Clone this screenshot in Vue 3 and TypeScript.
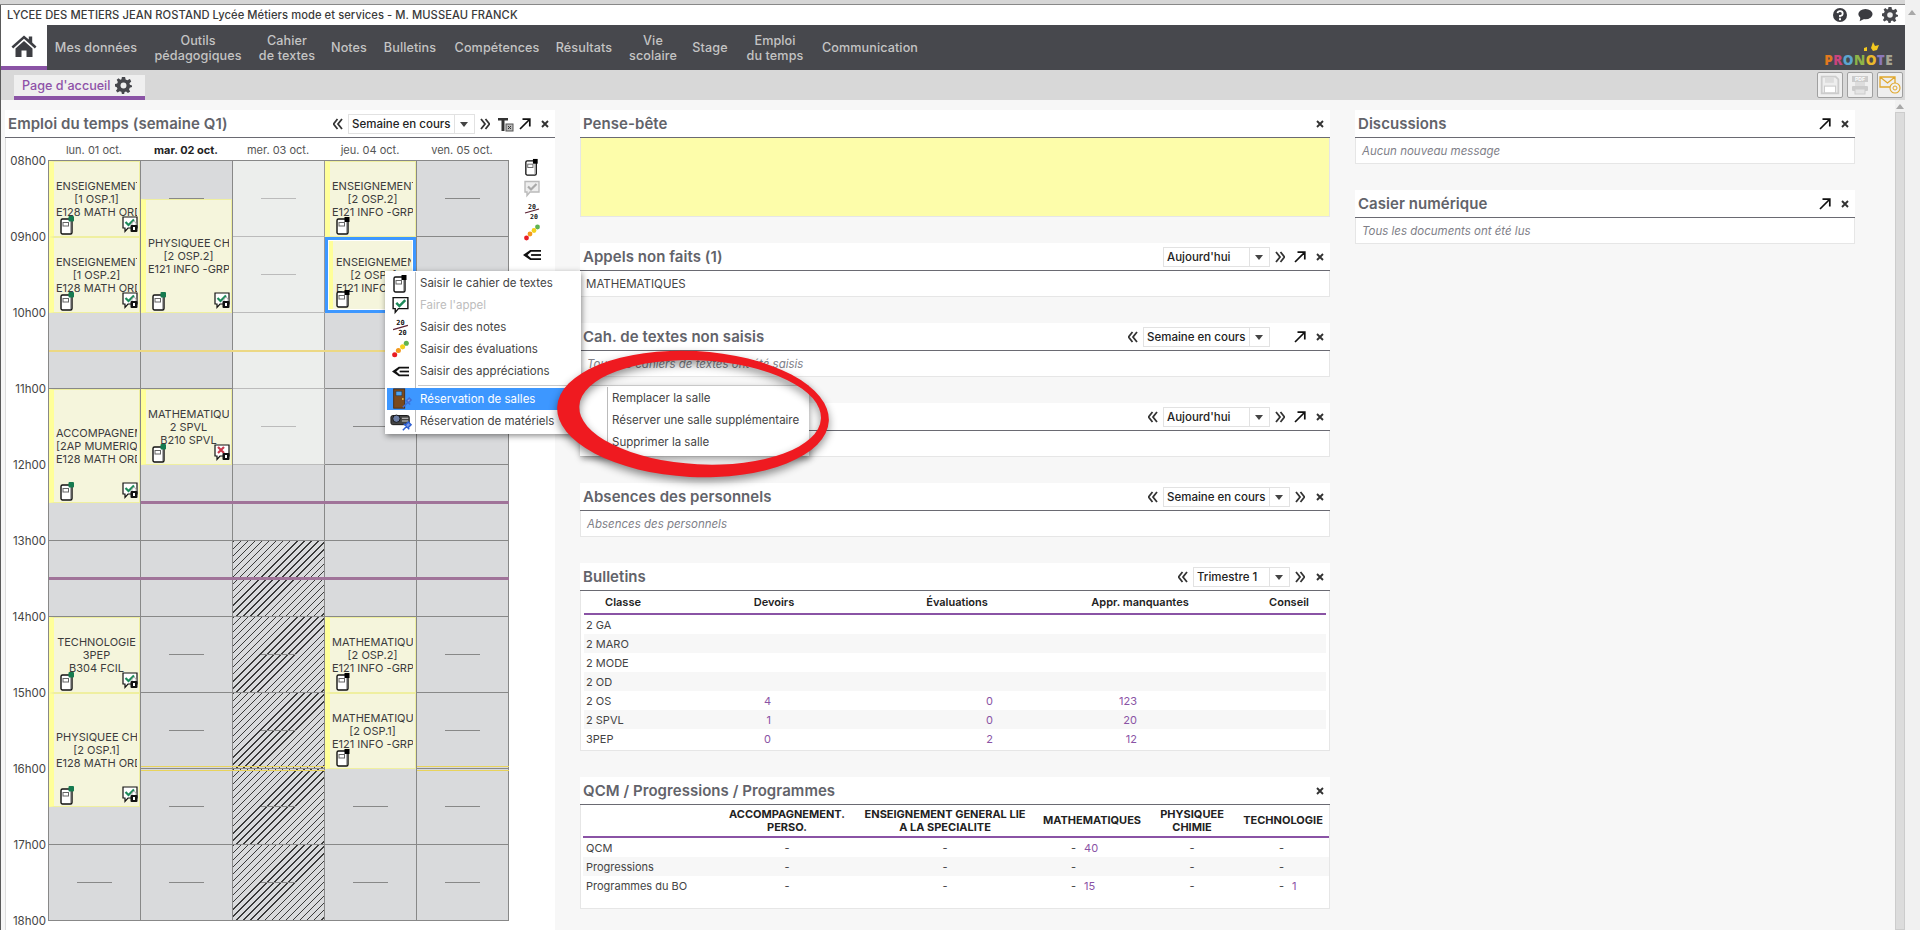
<script setup lang="ts">
interface NavItem { lines: string[]; width: number }
const nav: NavItem[] = [
  { lines: ['Mes données'], width: 98 },
  { lines: ['Outils', 'pédagogiques'], width: 106 },
  { lines: ['Cahier', 'de textes'], width: 72 },
  { lines: ['Notes'], width: 52 },
  { lines: ['Bulletins'], width: 70 },
  { lines: ['Compétences'], width: 104 },
  { lines: ['Résultats'], width: 70 },
  { lines: ['Vie', 'scolaire'], width: 68 },
  { lines: ['Stage'], width: 46 },
  { lines: ['Emploi', 'du temps'], width: 84 },
  { lines: ['Communication'], width: 106 }
]
const hours = ['08h00', '09h00', '10h00', '11h00', '12h00', '13h00', '14h00', '15h00', '16h00', '17h00', '18h00']
const days = ['lun. 01 oct.', 'mar. 02 oct.', 'mer. 03 oct.', 'jeu. 04 oct.', 'ven. 05 oct.']

interface Cell { key: string; area: string; kind: string }
const cells: Cell[] = []
for (let d = 0; d < 5; d++) {
  for (let h = 0; h < 10; h++) {
    let kind = ''
    if (d === 2 && h < 4) kind = 'light'
    if (d === 2 && h >= 5) kind = 'hatch'
    cells.push({ key: `${d}-${h}`, area: `${h * 2 + 1} / ${d + 1} / span 2 / span 1`, kind })
  }
}

interface Course {
  day: number; start: number; span: number; lines: string[];
  doc: string; chat: string; selected?: boolean
}
const courses: Course[] = [
  { day: 0, start: 0, span: 2, lines: ['ENSEIGNEMENT GENERAL', '[1 OSP.1]', 'E128 MATH ORDI'], doc: 'doc-green', chat: 'chat-ok' },
  { day: 0, start: 2, span: 2, lines: ['ENSEIGNEMENT GENERAL', '[1 OSP.2]', 'E128 MATH ORDI'], doc: 'doc-green', chat: 'chat-ok' },
  { day: 0, start: 6, span: 3, lines: ['ACCOMPAGNEMENT', '[2AP MUMERIQUE]', 'E128 MATH ORDI'], doc: 'doc-green', chat: 'chat-ok' },
  { day: 0, start: 12, span: 2, lines: ['TECHNOLOGIE', '3PEP', 'B304 FCIL'], doc: 'doc-green', chat: 'chat-ok' },
  { day: 0, start: 14, span: 3, lines: ['PHYSIQUEE CHIMIE', '[2 OSP.1]', 'E128 MATH ORDI'], doc: 'doc-green', chat: 'chat-ok' },
  { day: 1, start: 1, span: 3, lines: ['PHYSIQUEE CHIMIE', '[2 OSP.2]', 'E121 INFO -GRP'], doc: 'doc-green', chat: 'chat-ok' },
  { day: 1, start: 6, span: 2, lines: ['MATHEMATIQUES', '2 SPVL', 'B210 SPVL'], doc: 'doc-green', chat: 'chat-no' },
  { day: 3, start: 0, span: 2, lines: ['ENSEIGNEMENT GENERAL', '[2 OSP.2]', 'E121 INFO -GRP'], doc: 'doc-black', chat: '' },
  { day: 3, start: 2, span: 2, lines: ['ENSEIGNEMENT GENERAL', '[2 OSP.1]', 'E121 INFO -GRP'], doc: 'doc-black', chat: '', selected: true },
  { day: 3, start: 12, span: 2, lines: ['MATHEMATIQUES', '[2 OSP.2]', 'E121 INFO -GRP'], doc: 'doc-black', chat: '' },
  { day: 3, start: 14, span: 2, lines: ['MATHEMATIQUES', '[2 OSP.1]', 'E121 INFO -GRP'], doc: 'doc-black', chat: '' }
]
const courseArea = (c: Course) => `${c.start + 1} / ${c.day + 1} / span ${c.span} / span 1`

interface Rule { key: string; row: number; col: number; span: number; kind: string }
const rules: Rule[] = [
  { key: 'a', row: 4, col: 0, span: 5, kind: 'gold' },
  { key: 'b', row: 8, col: 1, span: 4, kind: 'purple' },
  { key: 'c', row: 10, col: 0, span: 5, kind: 'purple' },
  { key: 'd', row: 15, col: 1, span: 2, kind: 'double' },
  { key: 'e', row: 15, col: 4, span: 1, kind: 'double' }
]
const ruleArea = (r: Rule) => `${r.row + 1} / ${r.col + 1} / span 1 / span ${r.span}`

const sideIcons = ['doc-black', 'chat-gray', 'notes', 'dots', 'appr']

const bulletins = [
  ['2 GA', '', '', ''], ['2 MARO', '', '', ''], ['2 MODE', '', '', ''], ['2 OD', '', '', ''],
  ['2 OS', '4', '0', '123'], ['2 SPVL', '1', '0', '20'], ['3PEP', '0', '2', '12']
]
const menuItems = [
  { icon: 'doc-black', label: 'Saisir le cahier de textes', off: false },
  { icon: 'chat-green', label: "Faire l'appel", off: true },
  { icon: 'notes', label: 'Saisir des notes', off: false },
  { icon: 'dots', label: 'Saisir des évaluations', off: false },
  { icon: 'appr', label: 'Saisir des appréciations', off: false }
]
const subItems = ['Remplacer la salle', 'Réserver une salle supplémentaire', 'Supprimer la salle']
const qcmHeads = [['ACCOMPAGNEMENT.', 'PERSO.'], ['ENSEIGNEMENT GENERAL LIE', 'A LA SPECIALITE'], ['MATHEMATIQUES'], ['PHYSIQUEE', 'CHIMIE'], ['TECHNOLOGIE']]
const qcmRows = [
  { label: 'QCM', math: '40', tech: '' },
  { label: 'Progressions', math: '', tech: '' },
  { label: 'Programmes du BO', math: '15', tech: '1' }
]
</script>

<template>
  <div class="root">
    <svg class="sprites" aria-hidden="true">
      <defs>
        <symbol id="doc-green" viewBox="0 0 15 19">
          <rect x="1" y="3" width="11" height="15" rx="1.5" fill="#fff" stroke="#111" stroke-width="1.4" />
          <rect x="3" y="6.5" width="5.5" height="3.5" fill="#fff" stroke="#666" />
          <path d="M10.5 3.5V17" stroke="#aaa" />
          <rect x="8.5" y="0" width="5.5" height="5.5" rx="1" fill="#157a4f" />
        </symbol>
        <symbol id="doc-black" viewBox="0 0 15 19">
          <rect x="1" y="3" width="11" height="15" rx="1.5" fill="#fff" stroke="#111" stroke-width="1.4" />
          <rect x="3" y="6.5" width="5.5" height="3.5" fill="#fff" stroke="#666" />
          <path d="M10.5 3.5V17" stroke="#aaa" />
          <rect x="8.5" y="1" width="5" height="5" fill="#000" />
        </symbol>
        <symbol id="chat-ok" viewBox="0 0 16 18">
          <path d="M1 1H15V12H6L3 15.5V12H1Z" fill="#fff" stroke="#111" stroke-width="1.2" />
          <path d="M3.5 6L6.5 9L12 3.5" fill="none" stroke="#1d8a5a" stroke-width="2.2" />
          <rect x="8.5" y="9" width="7" height="7" rx="1" fill="#111" />
          <path d="M10 9V7.5A2 2 0 0 1 14 7.5V9" fill="none" stroke="#aaa" />
          <rect x="11" y="11" width="2" height="3" fill="#fff" />
        </symbol>
        <symbol id="chat-no" viewBox="0 0 16 18">
          <path d="M1 1H15V12H6L3 15.5V12H1Z" fill="#fff" stroke="#111" stroke-width="1.2" />
          <path d="M4 3L10 9M10 3L4 9" fill="none" stroke="#c8394b" stroke-width="2.2" />
          <rect x="8.5" y="9" width="7" height="7" rx="1" fill="#111" />
          <rect x="11" y="11" width="2" height="3" fill="#fff" />
        </symbol>
        <symbol id="chat-gray" viewBox="0 0 16 18">
          <path d="M1 1.5H15V12H6L3 15.5V12H1Z" fill="#eee" stroke="#bbb" stroke-width="1.4" />
          <path d="M4 6.5L7 9.5L12.5 4" fill="none" stroke="#aaa" stroke-width="2.2" />
        </symbol>
        <symbol id="chat-green" viewBox="0 0 16 18">
          <path d="M1 1.5H15V12H6L3 15.5V12H1Z" fill="#fff" stroke="#111" stroke-width="1.3" />
          <path d="M4 6.5L7 9.5L12.5 4" fill="none" stroke="#1d8a5a" stroke-width="2.4" />
        </symbol>
        <symbol id="notes" viewBox="0 0 16 18">
          <text x="4" y="7" class="sprite-num">20</text>
          <path d="M1 11L15 7" stroke="#5a2030" stroke-width="1.2" />
          <text x="6" y="16.5" class="sprite-num">20</text>
        </symbol>
        <symbol id="dots" viewBox="0 0 16 18">
          <circle cx="13.5" cy="3" r="2.4" fill="#5fb350" />
          <circle cx="10" cy="6.5" r="2.4" fill="#f2d21e" />
          <circle cx="6" cy="10" r="2.4" fill="#f39a1e" />
          <circle cx="2.5" cy="14" r="2.4" fill="#e81c24" />
        </symbol>
        <symbol id="appr" viewBox="0 0 20 13">
          <path d="M0 6.5L8 1H20V3H9L5 6.5L9 10H20V12H8Z" fill="#111" />
          <rect x="9" y="5.5" width="11" height="2" fill="#111" />
        </symbol>
        <symbol id="door" viewBox="0 0 24 24">
          <rect x="4" y="1" width="12" height="21" fill="#7a4a1e" stroke="#4d2d10" />
          <rect x="6.5" y="3.5" width="6.5" height="5" fill="#4da3f0" stroke="#234" stroke-width=".6" />
          <circle cx="14" cy="12" r="1" fill="#e5c04a" />
          <path d="M14 21L19 16M17 13L22 18M18 14L21 11L23 13L20 16" stroke="#3f6fd8" stroke-width="1.6" fill="#8aa6ea" />
        </symbol>
        <symbol id="projector" viewBox="0 0 24 24">
          <rect x="1" y="6" width="20" height="10" rx="2" fill="#444" stroke="#111" />
          <circle cx="7" cy="9.5" r="4" fill="#6d7fa6" stroke="#111" />
          <path d="M13 9H20M13 12H20" stroke="#ddd" />
          <path d="M14 22L18 18M15 15L21 21M17 16L20 13L23 16L20 19" stroke="#2c5fd3" stroke-width="1.6" fill="#7c9ae6" />
        </symbol>
        <symbol id="prev" viewBox="0 0 10 11">
          <path d="M4.5 0.5L0.5 5.5L4.5 10.5M9 0.5L5 5.5L9 10.5" fill="none" stroke="#333" stroke-width="1.8" />
        </symbol>
        <symbol id="next" viewBox="0 0 10 11">
          <path d="M1 0.5L5 5.5L1 10.5M5.5 0.5L9.5 5.5L5.5 10.5" fill="none" stroke="#333" stroke-width="1.8" />
        </symbol>
        <symbol id="open" viewBox="0 0 12 12">
          <path d="M1 11L10.5 1.5M3.5 1.2H10.8V8.5" fill="none" stroke="#111" stroke-width="1.7" />
        </symbol>
        <symbol id="close" viewBox="0 0 8 8">
          <path d="M1 1L7 7M7 1L1 7" fill="none" stroke="#333" stroke-width="1.9" />
        </symbol>
        <symbol id="gear" viewBox="0 0 16 16">
          <path d="M6.5 0H9.5L10 2.4L11.7 3.1L13.8 1.8L14.2 2.2L15.3 4.3L13.6 5.9L14 7.2L16 8V9.5L13.9 10.1L13.2 11.7L14.3 13.7L12.2 15L10.4 13.6L9 14.1L8.6 16H6.5L6 13.9L4.4 13.3L2.4 14.6L.9 12.9L2.3 11L1.7 9.6L0 9V6.6L2 6.1L2.7 4.6L1.6 2.6L3.3 1.1L5.1 2.5L6.1 2.1Z" fill="#46474c" fill-rule="evenodd" />
          <circle cx="8" cy="8" r="2.8" fill="#eee" />
        </symbol>
      </defs>
    </svg>

    <div class="page">
      <div class="topstrip"></div>
      <header class="identity">
        <span class="school">LYCEE DES METIERS JEAN ROSTAND Lycée Métiers mode et services - M. MUSSEAU FRANCK</span>
        <div class="top-icons">
          <svg class="ti" viewBox="0 0 16 16"><circle cx="8" cy="8" r="7" fill="#3a3b40" /><path d="M5.5 6.2A2.6 2.4 0 1 1 8 9V10.2" fill="none" stroke="#fff" stroke-width="1.8" /><rect x="7" y="11.2" width="2" height="2" fill="#fff" /></svg>
          <svg class="ti" viewBox="0 0 18 16"><ellipse cx="9.5" cy="7" rx="8" ry="5.8" fill="#3a3b40" /><path d="M4 10L3 15L9 12Z" fill="#3a3b40" /></svg>
          <svg class="ti"><use href="#gear" /></svg>
        </div>
      </header>

      <nav class="nav">
        <div class="home">
          <svg class="home-ico" viewBox="0 0 26 24">
            <path d="M0.5 12.5L13 1.5L17.8 5.6V2.5H21.2V8.6L25.5 12.5L23.8 14.4L13 4.8L2.2 14.4Z" fill="#3d3e43" />
            <path d="M4.5 14.5L13 7L21.5 14.5V23H15.5V16.5H10.5V23H4.5Z" fill="#3d3e43" />
          </svg>
        </div>
        <div v-for="item in nav" :key="item.lines[0]" class="nav-item" :style="{ width: item.width + 'px' }">
          <span v-for="l in item.lines" :key="l">{{ l }}</span>
        </div>
        <div class="logo">
          <svg class="fly" viewBox="0 0 18 12">
            <path d="M11 0L13 4L17 3L15 8L11 9L9 6Z" fill="#f4c91f" />
            <path d="M2 6L5 5L5 9L2 9Z" fill="#f4c91f" />
          </svg>
          <span class="l1">P</span><span class="l2">R</span><span class="l3">O</span><span class="l4">N</span><span class="l5">O</span><span class="l6">T</span><span class="l7">E</span>
        </div>
      </nav>

      <div class="tabbar">
        <div class="tab">
          <span>Page d'accueil</span>
          <svg class="tab-gear"><use href="#gear" /></svg>
        </div>
        <div class="actions">
          <div class="act off">
            <svg viewBox="0 0 18 18"><path d="M1.5 1.5H14L16.5 4V16.5H1.5Z" fill="#eee" stroke="#ccc" stroke-width="1.6" /><rect x="4.5" y="2" width="8" height="5" fill="#ddd" /><rect x="4" y="10" width="10" height="6" fill="#fff" stroke="#ccc" /></svg>
          </div>
          <div class="act off">
            <svg viewBox="0 0 20 20"><rect x="2" y="1" width="16" height="6" fill="#ccc" /><text x="10" y="6" class="pdf">PDF</text><rect x="5" y="7" width="10" height="4" fill="#ddd" /><rect x="2" y="11" width="16" height="5" rx="1" fill="#ccc" /><rect x="5" y="14" width="10" height="5" fill="#e4e4e4" stroke="#ccc" /></svg>
          </div>
          <div class="act">
            <svg viewBox="0 0 22 20"><path d="M1 2H16V12H1ZM1 2L8.5 8L16 2" fill="none" stroke="#e0a82e" stroke-width="1.3" /><circle cx="16" cy="13" r="5" fill="#f2f2f2" stroke="#e0a82e" stroke-width="1.1" /><circle cx="16" cy="13" r="2" fill="none" stroke="#e0a82e" /></svg>
          </div>
        </div>
      </div>

      <main class="main">
        <div class="columns">
          <section class="panel timetable">
            <div class="phead">
              <h2>Emploi du temps (semaine Q1)</h2>
              <svg class="slot"><use href="#prev" x="5" y="4" width="10" height="12" /></svg>
              <div class="select w127"><span>Semaine en cours</span><i></i></div>
              <svg class="slot"><use href="#next" x="5" y="4" width="10" height="12" /></svg>
              <svg class="slot" viewBox="0 0 20 20"><path d="M3 4H13V6.5H9.5V17H6.5V6.5H3Z" fill="#333" /><rect x="11" y="10" width="7" height="7" fill="#bbb" stroke="#555" /><path d="M13 12L16 15M16 12L13 15" stroke="#333" /></svg>
              <svg class="slot"><use href="#open" x="4" y="4" width="12" height="12" /></svg>
              <svg class="slot"><use href="#close" x="6" y="6" width="8" height="8" /></svg>
            </div>
            <div class="tt-body">
              <div class="times">
                <span v-for="h in hours" :key="h">{{ h }}</span>
              </div>
              <div class="tt-main">
                <div class="days">
                  <span v-for="(d, i) in days" :key="d" :class="{ today: i === 1 }">{{ d }}</span>
                </div>
                <div class="grid">
                  <div v-for="c in cells" :key="c.key" class="cell" :class="c.kind" :style="{ gridArea: c.area }"></div>
                  <div v-for="r in rules" :key="r.key" class="rule" :class="r.kind" :style="{ gridArea: ruleArea(r) }"></div>
                  <div v-for="c in courses" :key="c.day + '-' + c.start" class="course" :class="{ selected: c.selected }" :style="{ gridArea: courseArea(c) }">
                    <div class="lines"><div v-for="l in c.lines" :key="l">{{ l }}</div></div>
                    <svg class="c-doc"><use :href="'#' + c.doc" /></svg>
                    <svg v-if="c.chat" class="c-chat"><use :href="'#' + c.chat" /></svg>
                  </div>
                </div>
              </div>
              <div class="side">
                <svg v-for="s in sideIcons" :key="s" class="side-ico"><use :href="'#' + s" /></svg>
              </div>
            </div>
          </section>

          <div class="stack mid">
            <section class="panel">
              <div class="phead"><h2>Pense-bête</h2><svg class="slot"><use href="#close" x="6" y="6" width="8" height="8" /></svg></div>
              <div class="note"></div>
            </section>
            <section class="panel">
              <div class="phead">
                <h2>Appels non faits (1)</h2>
                <div class="select w107"><span>Aujourd'hui</span><i></i></div>
                <svg class="slot"><use href="#next" x="5" y="4" width="10" height="12" /></svg>
                <svg class="slot"><use href="#open" x="4" y="4" width="12" height="12" /></svg>
                <svg class="slot"><use href="#close" x="6" y="6" width="8" height="8" /></svg>
              </div>
              <div class="pbody">MATHEMATIQUES</div>
            </section>
            <section class="panel">
              <div class="phead">
                <h2>Cah. de textes non saisis</h2>
                <svg class="slot"><use href="#prev" x="5" y="4" width="10" height="12" /></svg>
                <div class="select w127"><span>Semaine en cours</span><i></i></div>
                <div class="slot"></div>
                <svg class="slot"><use href="#open" x="4" y="4" width="12" height="12" /></svg>
                <svg class="slot"><use href="#close" x="6" y="6" width="8" height="8" /></svg>
              </div>
              <div class="pbody empty">Tous les cahiers de textes ont été saisis</div>
            </section>
            <section class="panel">
              <div class="phead">
                <h2></h2>
                <svg class="slot"><use href="#prev" x="5" y="4" width="10" height="12" /></svg>
                <div class="select w107"><span>Aujourd'hui</span><i></i></div>
                <svg class="slot"><use href="#next" x="5" y="4" width="10" height="12" /></svg>
                <svg class="slot"><use href="#open" x="4" y="4" width="12" height="12" /></svg>
                <svg class="slot"><use href="#close" x="6" y="6" width="8" height="8" /></svg>
              </div>
              <div class="pbody"></div>
            </section>
            <section class="panel">
              <div class="phead">
                <h2>Absences des personnels</h2>
                <svg class="slot"><use href="#prev" x="5" y="4" width="10" height="12" /></svg>
                <div class="select w127"><span>Semaine en cours</span><i></i></div>
                <svg class="slot"><use href="#next" x="5" y="4" width="10" height="12" /></svg>
                <svg class="slot"><use href="#close" x="6" y="6" width="8" height="8" /></svg>
              </div>
              <div class="pbody empty">Absences des personnels</div>
            </section>
            <section class="panel">
              <div class="phead">
                <h2>Bulletins</h2>
                <svg class="slot"><use href="#prev" x="5" y="4" width="10" height="12" /></svg>
                <div class="select w97"><span>Trimestre 1</span><i></i></div>
                <svg class="slot"><use href="#next" x="5" y="4" width="10" height="12" /></svg>
                <svg class="slot"><use href="#close" x="6" y="6" width="8" height="8" /></svg>
              </div>
              <div class="tbody bull">
                <div class="trow bull-row thead">
                  <b>Classe</b><b>Devoirs</b><b>Évaluations</b><b>Appr. manquantes</b><b>Conseil</b>
                </div>
                <div v-for="r in bulletins" :key="r[0]" class="trow bull-row">
                  <span class="tl">{{ r[0] }}</span>
                  <span class="v v1">{{ r[1] }}</span>
                  <span class="v v2">{{ r[2] }}</span>
                  <span class="v v1">{{ r[3] }}</span>
                  <span></span>
                </div>
              </div>
            </section>
            <section class="panel">
              <div class="phead"><h2>QCM / Progressions / Programmes</h2><svg class="slot"><use href="#close" x="6" y="6" width="8" height="8" /></svg></div>
              <div class="tbody qcm">
                <div class="trow qcm-row qhead">
                  <span></span>
                  <b v-for="h in qcmHeads" :key="h[0]"><span v-for="l in h" :key="l">{{ l }}</span></b>
                </div>
                <div v-for="r in qcmRows" :key="r.label" class="trow qcm-row">
                  <span class="tl">{{ r.label }}</span>
                  <span class="ctr">-</span>
                  <span class="ctr">-</span>
                  <span class="pair p-math"><em>-</em><i>{{ r.math }}</i></span>
                  <span class="ctr">-</span>
                  <span class="pair p-tech"><em>-</em><i>{{ r.tech }}</i></span>
                </div>
              </div>
            </section>
          </div>

          <div class="stack right">
            <section class="panel">
              <div class="phead"><h2>Discussions</h2>
                <svg class="slot"><use href="#open" x="4" y="4" width="12" height="12" /></svg>
                <svg class="slot"><use href="#close" x="6" y="6" width="8" height="8" /></svg></div>
              <div class="pbody empty">Aucun nouveau message</div>
            </section>
            <section class="panel">
              <div class="phead"><h2>Casier numérique</h2>
                <svg class="slot"><use href="#open" x="4" y="4" width="12" height="12" /></svg>
                <svg class="slot"><use href="#close" x="6" y="6" width="8" height="8" /></svg></div>
              <div class="pbody empty">Tous les documents ont été lus</div>
            </section>
          </div>
        </div>
        <div class="inner-scroll"><i class="up"></i><b></b></div>
      </main>
    </div>

    <div class="outer-scroll"><i class="up"></i></div>

    <div class="menu">
      <div class="menu-gutter"></div>
      <div v-for="m in menuItems" :key="m.label" class="mrow" :class="{ off: m.off }">
        <svg class="micon"><use :href="'#' + m.icon" /></svg>
        <span>{{ m.label }}</span>
      </div>
      <div class="msep"></div>
      <div class="mrow active">
        <svg class="micon big"><use href="#door" /></svg>
        <span>Réservation de salles</span>
      </div>
      <div class="mrow">
        <svg class="micon big"><use href="#projector" /></svg>
        <span>Réservation de matériels</span>
        <i class="caret"></i>
      </div>
    </div>

    <div class="submenu">
      <div v-for="s in subItems" :key="s" class="srow">{{ s }}</div>
    </div>

    <svg class="ring" viewBox="0 0 300 150">
      <path transform="rotate(3 150 75)" fill-rule="evenodd" fill="#ef1a20"
        d="M14 75A136 63 0 1 0 286 75A136 63 0 1 0 14 75ZM36 73A121 52 0 1 1 278 73A121 52 0 1 1 36 73Z" />
    </svg>
  </div>
</template>

<style>
html, body { margin: 0; height: 100%; overflow: hidden; background: #f7f7f7; }
</style>

<style scoped>
.root {
  position: relative; width: 1920px; height: 930px; display: flex; overflow: hidden;
  font-family: Inter, "Liberation Sans", sans-serif; font-size: 11.5px; color: #444;
}
.sprites { position: absolute; width: 0; height: 0; }
.sprite-num { font: 700 6.6px "DejaVu Sans Mono", monospace; fill: #111; }
.pdf { font: 700 5px "Liberation Sans", sans-serif; fill: #fff; text-anchor: middle; }
.page { width: 1905px; display: flex; flex-direction: column; border-left: 1px solid #5a5a5a; box-sizing: border-box; }
.topstrip { height: 4px; background: #d6d6d6; border-bottom: 1px solid #888; flex: none; margin-left: -1px; }
.identity { height: 20px; flex: none; display: flex; align-items: center; justify-content: space-between; padding: 0 7px 0 6px; background: #fff; }
.school { font-size: 11.2px; font-weight: 500; color: #3a3a3a; letter-spacing: 0.06px; }
.top-icons { display: flex; align-items: center; gap: 9px; }
.ti { width: 16px; height: 16px; display: block; }

.nav { height: 45px; flex: none; display: flex; background: #47484d; position: relative; }
.home { width: 46px; background: #fff; border-bottom: 4px solid #8a53a5; box-sizing: border-box; display: flex; align-items: center; justify-content: center; }
.home-ico { width: 26px; height: 24px; display: block; margin-top: 1px; }
.nav-item { display: flex; flex-direction: column; align-items: center; justify-content: center; color: #c4c4c4; font-size: 12.6px; font-weight: 500; line-height: 15px; letter-spacing: .1px; }
.logo { margin-left: auto; align-self: flex-end; margin-right: 12px; margin-bottom: 3px; font-size: 13.5px; font-weight: 800; line-height: 14px; letter-spacing: .4px; position: relative; font-family: "Open Sans", sans-serif; }
.fly { position: absolute; left: 38px; top: -11px; width: 18px; height: 12px; }
.l1 { color: #e2791f; } .l2 { color: #c9447e; } .l3 { color: #5ca6cf; } .l4 { color: #8eb448; }
.l5 { color: #e9b92d; } .l6 { color: #8a78ba; } .l7 { color: #a5a493; }

.tabbar { height: 30px; flex: none; background: #d8d8d8; display: flex; justify-content: space-between; }
.tab { margin: 5px 0 0 13px; width: 131px; box-sizing: border-box; height: 25px; background: #efefef; border-bottom: 4px solid #8a53a5; display: flex; align-items: center; padding-left: 8px; gap: 5px; color: #8e52a8; font-size: 12.6px; font-weight: 500; }
.tab-gear { width: 17px; height: 17px; }
.actions { display: flex; gap: 4px; padding: 2px 2px 0 0; }
.act { width: 26px; height: 26px; box-sizing: border-box; border: 1px solid #a0a0a0; border-radius: 2px; background: #efefef; display: flex; align-items: center; justify-content: center; }
.act svg { width: 22px; height: 20px; }

.main { flex: 1; min-height: 0; display: flex; background: #f7f7f7; }
.columns { flex: 1; display: flex; gap: 25px; padding: 10px 0 0 4px; min-width: 0; }
.panel { background: transparent; }
.phead { height: 27px; background: #fff; border-bottom: 1px solid #6a6a72; display: flex; align-items: center; box-sizing: content-box; }
.phead h2 { flex: 1; margin: 0; padding-left: 3px; font-size: 15px; font-weight: 600; color: #62636a; white-space: nowrap; letter-spacing: .05px; }
.slot { width: 20px; height: 20px; flex: none; display: block; }

.select { height: 20px; box-sizing: border-box; border: 1px solid #e2e2e2; background: #fff; display: flex; align-items: center; flex: none; color: #222; font-size: 11.5px; font-weight: 500; }
.select span { flex: 1; padding-left: 3px; white-space: nowrap; overflow: hidden; }
.select i { width: 19px; height: 18px; border-left: 1px solid #e2e2e2; flex: none; position: relative; }
.select i::after { content: ""; position: absolute; left: 5px; top: 7px; border: 4px solid transparent; border-top: 5px solid #444; border-bottom: 0; }
.w127 { width: 127px; } .w107 { width: 107px; } .w97 { width: 97px; }

.timetable { width: 550px; flex: none; background: #fff; height: 820px; }
.tt-body { display: flex; border-left: 1px solid #ddd; background: #fff; height: 792px; }
.times { width: 42px; flex: none; padding-top: 16px; display: grid; grid-template-rows: repeat(11, 76px); text-align: right; color: #444; font-size: 11.5px; }
.times span { line-height: 14px; padding-right: 2px; }
.tt-main { width: 461px; flex: none; }
.days { height: 23px; display: grid; grid-template-columns: repeat(5, 92px); align-items: center; text-align: center; color: #555; font-size: 11px; }
.days .today { font-weight: 700; color: #222; }
.grid { display: grid; grid-template-columns: repeat(5, 92px); grid-template-rows: repeat(20, 38px); border-left: 1px solid #888; border-top: 1px solid #888; margin-top: -1px; width: 460px; background: #d9dadc; }
.cell { background: #d9dadc; border-right: 1px solid #888; border-bottom: 1px solid #888; position: relative; min-width: 0; box-sizing: border-box; }
.cell::after { content: ""; position: absolute; left: 28px; right: 28px; top: 37px; height: 1px; background: #888; }
.cell.light { background: #eceeec; border-bottom-color: #bbb; border-right-color: #999; }
.cell.light::after { background: #bbb; }
.cell.hatch { background: repeating-linear-gradient(135deg, #3a3a3a 0 1px, #d9dadc 1px 5px); }
.rule { height: 2px; align-self: end; z-index: 1; margin-bottom: -1px; }
.rule.gold { background: #ecd884; }
.rule.purple { height: 3px; background: #a07399; }
.rule.double { height: 3px; border-top: 1px solid #e8d35c; border-bottom: 1px solid #e8d35c; margin-bottom: -2px; }
.course { z-index: 2; position: relative; background: #f5f5dc; border: 1px solid #efefa0; border-left: 5px solid #ffff99; box-sizing: border-box; margin: 0 1px 0 0; padding: 0 2px; display: flex; align-items: center; min-width: 0; }
.lines { width: 100%; overflow: hidden; white-space: nowrap; text-align: center; line-height: 13px; font-size: 11px; color: #3c3c3c; }
.course.selected { border: 3px solid #3d97ff; outline: 1px solid #fff; outline-offset: -4px; padding-left: 8px; border-left-width: 3px; box-shadow: inset 5px 0 0 #ffff99; }
.c-doc { position: absolute; left: 6px; bottom: 1px; width: 15px; height: 19px; }
.course.selected .c-doc { left: 8px; bottom: 2px; }
.c-chat { position: absolute; right: 1px; bottom: 2px; width: 16px; height: 18px; }
.side { flex: 1; padding: 20px 0 0 14px; display: flex; flex-direction: column; gap: 4px; }
.side-ico { width: 18px; height: 18px; display: block; }

.stack { display: flex; flex-direction: column; gap: 26px; flex: none; }
.mid { width: 750px; }
.right { width: 500px; }
.stack .phead { padding-right: 0; }
.note { height: 78px; background: #fdfdaa; border: 1px solid #e6e6e6; border-top: 0; }
.pbody { height: 26px; box-sizing: border-box; background: #fff; border: 1px solid #e6e6e6; border-top: 0; padding: 0 5px; display: flex; align-items: center; font-size: 11.5px; color: #444; }
.pbody.empty { font-style: italic; color: #808088; padding-left: 6px; }

.tbody { background: #fff; border: 1px solid #e6e6e6; border-top: 0; box-sizing: border-box; }
.bull { padding: 0 3px; height: 160px; }
.trow { display: grid; align-items: center; height: 19px; font-size: 11px; color: #444; }
.trow:nth-child(odd):not(.thead):not(.qhead) { background: #f7f7f7; }
.bull-row { grid-template-columns: 78px 224px 142px 224px 74px; }
.bull-row.thead { height: 23px; border-bottom: 2px solid #8a53a5; box-sizing: content-box; height: 22px; }
.thead b { text-align: center; font-weight: 600; color: #222; }
.tl { padding-left: 2px; }
.v { text-align: right; color: #8a53a5; }
.v1 { padding-right: 115px; }
.v2 { padding-right: 35px; }
.qcm { height: 104px; }
.qcm-row { grid-template-columns: 139px 130px 186px 108px 92px 90px; margin: 0 0 0 2px; }
.qcm-row .tl { padding-left: 3px; }
.qhead { height: 31px; border-bottom: 2px solid #8a53a5; }
.qhead b { display: flex; flex-direction: column; align-items: center; text-align: center; font-weight: 700; color: #222; line-height: 13px; font-size: 11px; white-space: nowrap; }
.ctr { text-align: center; }
.pair { display: flex; gap: 8px; }
.pair em { font-style: normal; }
.pair i { font-style: normal; color: #8a53a5; }
.p-math { padding-left: 33px; }
.p-tech { padding-left: 41px; }

.inner-scroll { width: 10px; flex: none; background: #f1f1f1; position: relative; }
.inner-scroll b { position: absolute; left: 0; right: 0; top: 12px; bottom: 0; background: #dcdcdc; border: 1px solid #ccc; box-sizing: border-box; }
.up { position: absolute; border: 4px solid transparent; border-bottom: 5px solid #a8a8a8; border-top: 0; }
.inner-scroll .up { left: 1px; top: 4px; }
.outer-scroll { width: 15px; flex: none; background: #f1f1f1; position: relative; }
.outer-scroll .up { left: 3px; top: 10px; border-width: 0 4px 5px; }

.menu { position: absolute; left: 385px; top: 271px; width: 196px; height: 163px; padding-top: 1px; box-sizing: border-box; background: #fff; box-shadow: 1px 2px 6px rgba(0,0,0,.45); z-index: 5; }
.menu-gutter { position: absolute; left: 30px; top: 1px; bottom: 2px; width: 1px; background: #bbb; }
.mrow { height: 22px; display: flex; align-items: center; margin: 0 2px; position: relative; font-size: 11.5px; color: #444; white-space: nowrap; }
.mrow span { position: absolute; left: 33px; }
.mrow.off { color: #bdbdbd; }
.mrow.active { background: #3d97ff; color: #fff; }
.micon { width: 17px; height: 19px; margin-left: 5px; display: block; }
.micon.big { width: 24px; height: 22px; margin-left: 2px; }
.msep { margin: 3px 2px 2px 33px; height: 1px; background: #c8c8c8; }
.caret { position: absolute; left: 182px; top: 7px; border: 4px solid transparent; border-left: 5px solid #111; border-right: 0; }
.submenu { position: absolute; left: 580px; top: 385px; width: 229px; height: 71px; box-sizing: border-box; background: #fff; border-top: 1px solid #c8c8c8; padding: 1px 0 0 27px; box-shadow: 1px 3px 6px rgba(0,0,0,.35); z-index: 6; }
.submenu::before { content: ""; position: absolute; left: 27px; top: 1px; bottom: 4px; width: 1px; background: #bbb; }
.srow { height: 22px; line-height: 22px; padding-left: 5px; font-size: 11.5px; color: #444; white-space: nowrap; }
.ring { position: absolute; left: 543px; top: 339px; width: 300px; height: 150px; z-index: 7; filter: drop-shadow(0 4px 4px rgba(0,0,0,.45)); }
</style>
